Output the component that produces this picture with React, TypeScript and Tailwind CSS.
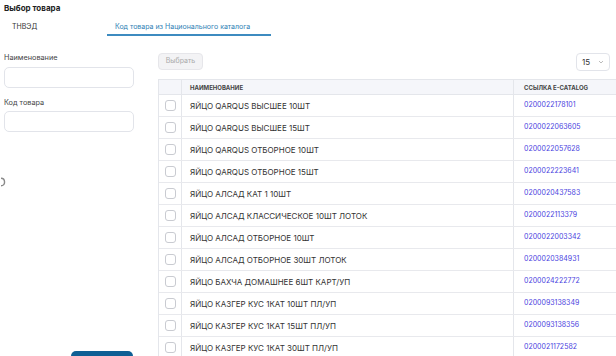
import React from "react";

const rows: [string, string][] = [
  ["ЯЙЦО QARQUS ВЫСШЕЕ 10ШТ", "0200022178101"],
  ["ЯЙЦО QARQUS ВЫСШЕЕ 15ШТ", "0200022063605"],
  ["ЯЙЦО QARQUS ОТБОРНОЕ 10ШТ", "0200022057628"],
  ["ЯЙЦО QARQUS ОТБОРНОЕ 15ШТ", "0200022223641"],
  ["ЯЙЦО АЛСАД КАТ 1 10ШТ", "0200020437583"],
  ["ЯЙЦО АЛСАД КЛАССИЧЕСКОЕ 10ШТ ЛОТОК", "0200022113379"],
  ["ЯЙЦО АЛСАД ОТБОРНОЕ 10ШТ", "0200022003342"],
  ["ЯЙЦО АЛСАД ОТБОРНОЕ 30ШТ ЛОТОК", "0200020384931"],
  ["ЯЙЦО БАХЧА ДОМАШНЕЕ 6ШТ КАРТ/УП", "0200024222772"],
  ["ЯЙЦО КАЗГЕР КУС 1КАТ 10ШТ ПЛ/УП", "0200093138349"],
  ["ЯЙЦО КАЗГЕР КУС 1КАТ 15ШТ ПЛ/УП", "0200093138356"],
  ["ЯЙЦО КАЗГЕР КУС 1КАТ 30ШТ ПЛ/УП", "0200021172582"],
];

export default function App() {
  return (
    <div
      className="w-[616px] h-[356px] overflow-hidden bg-white text-[#333]"
      style={{ fontFamily: "Inter, 'Noto Sans', sans-serif" }}
    >
      <div className="pl-[4px] pt-[2px] h-[14px] text-[8px] font-bold text-[#222] leading-[12px]">
        Выбор товара
      </div>
      <div className="flex h-[22px] text-[7px]">
        <div className="w-[107px] pl-[12px] pt-[8px] text-[#333]">ТНВЭД</div>
        <div className="w-[164px] pl-[8px] pt-[8px] text-[#2f7fb5] border-b-2 border-[#3d8bc0]">
          Код товара из Национального каталога
        </div>
      </div>
      <div className="flex mt-[17px]">
        <div className="w-[158px] shrink-0 pl-[4px] flex flex-col">
          <div className="text-[7.3px] text-[#444] leading-[10px]">Наименование</div>
          <div className="mt-[4px] w-[130px] h-[21px] rounded-[5px] border border-[#e2e4ea]" />
          <div className="mt-[10px] text-[7.3px] text-[#444] leading-[10px]">Код товара</div>
          <div className="mt-[3px] w-[130px] h-[21px] rounded-[5px] border border-[#e2e4ea]" />
          <svg className="mt-[45px] -ml-[4px]" width="8" height="10" viewBox="0 0 8 10" fill="none">
            <path d="M1 1.2 C5.5 1.2 6 8.8 1 8.8" stroke="#8a8a8a" strokeWidth="1.4" />
          </svg>
          <div className="mt-[164px] ml-[67px] w-[62px] h-[10px] rounded-t-[5px] bg-[#0e5f94]" />
        </div>
        <div className="w-[470px] shrink-0">
          <div className="flex justify-between h-[26px] w-[452px]">
            <div className="h-[17px] w-[45px] rounded-[4px] bg-[#f3f3f5] border border-[#e6e6ea] text-[7px] text-[#aaa] flex items-center justify-center">
              Выбрать
            </div>
            <div className="h-[18px] w-[34px] rounded-[4px] border border-[#e2e4ea] flex items-center justify-between pl-[5px] pr-[5px] text-[8px] text-[#333]">
              <span>15</span>
              <svg width="6" height="4" viewBox="0 0 6 4" fill="none">
                <path d="M1 1l2 2 2-2" stroke="#aaa" strokeWidth="0.8" />
              </svg>
            </div>
          </div>
          <div className="border-l border-[#e4e6eb] w-[470px]">
            <div className="flex h-[16px] bg-[#f5f6fa] border-y border-[#e4e6eb] text-[6px] font-bold text-[#444]">
              <div className="w-[23px] border-r border-[#e4e6eb]" />
              <div className="w-[332px] border-r border-[#e4e6eb] pl-[8px] flex items-center">НАИМЕНОВАНИЕ</div>
              <div className="flex-1 pl-[10px] flex items-center">ССЫЛКА E-CATALOG</div>
            </div>
            {rows.map(([name, code]) => (
              <div key={code} className="flex h-[22px] border-b border-[#e8e9ed]">
                <div className="w-[23px] border-r border-[#e4e6eb] flex items-center justify-center">
                  <div className="w-[11px] h-[11px] rounded-[3px] border border-[#c9cbd1]" />
                </div>
                <div className="w-[332px] border-r border-[#e4e6eb] pl-[8px] flex items-center text-[#333] text-[8px]">
                  {name}
                </div>
                <div className="flex-1 pl-[10px] flex items-center text-[#4a3fe0] text-[7px]">{code}</div>
              </div>
            ))}
          </div>
        </div>
      </div>
    </div>
  );
}
